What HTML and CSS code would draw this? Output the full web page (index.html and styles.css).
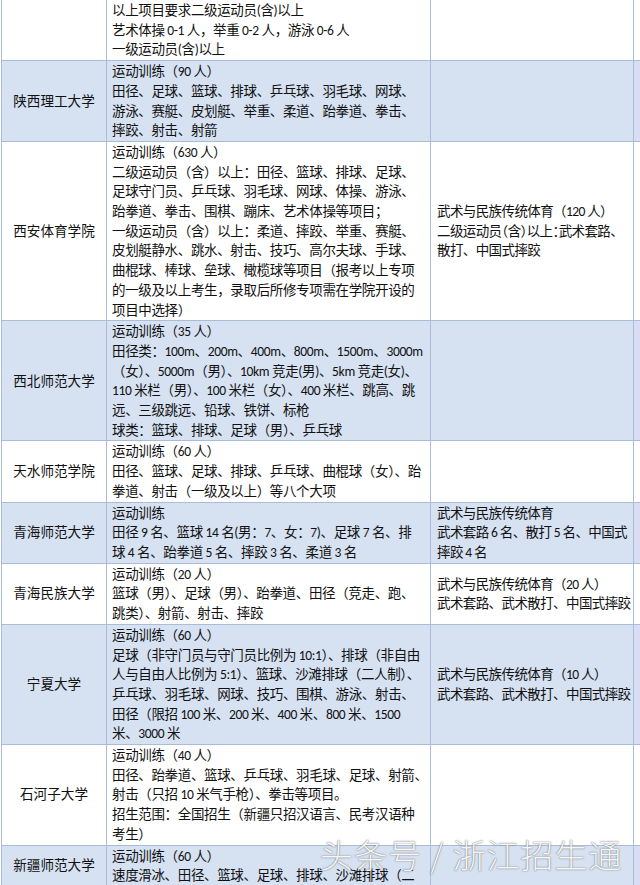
FILE: index.html
```html
<!DOCTYPE html>
<html lang="zh-CN">
<head>
<meta charset="utf-8">
<title>体育院校招生项目</title>
<link rel="stylesheet" href="styles.css">
</head>
<body>
<div class="page">
<table class="plan">
  <colgroup>
    <col class="c-name"><col class="c-main"><col class="c-side"><col class="c-edge">
  </colgroup>
  <tbody>
    <tr class="row-w row-first">
      <td class="name"></td>
      <td class="main">以上项目要求二级运动员(含)以上<br>艺术体操 0-1 人，举重 0-2 人，游泳 0-6 人<br>一级运动员(含)以上</td>
      <td class="side"></td><td class="edge"></td>
    </tr>
    <tr class="row-b">
      <td class="name">陕西理工大学</td>
      <td class="main">运动训练（90 人）<br>田径、足球、篮球、排球、乒乓球、羽毛球、网球、<br>游泳、赛艇、皮划艇、举重、柔道、跆拳道、拳击、<br>摔跤、射击、射箭</td>
      <td class="side"></td><td class="edge"></td>
    </tr>
    <tr class="row-w">
      <td class="name">西安体育学院</td>
      <td class="main">运动训练（630 人）<br>二级运动员（含）以上：田径、篮球、排球、足球、<br>足球守门员、乒乓球、羽毛球、网球、体操、游泳、<br>跆拳道、拳击、围棋、蹦床、艺术体操等项目；<br>一级运动员（含）以上：柔道、摔跤、举重、赛艇、<br>皮划艇静水、跳水、射击、技巧、高尔夫球、手球、<br>曲棍球、棒球、垒球、橄榄球等项目（报考以上专项<br>的一级及以上考生，录取后所修专项需在学院开设的<br>项目中选择）</td>
      <td class="side">武术与民族传统体育（120 人）<br>二级运动员<span class="halt">（含）</span>以上<span class="halt">：</span>武术套路、<br>散打、中国式摔跤</td><td class="edge"></td>
    </tr>
    <tr class="row-b">
      <td class="name">西北师范大学</td>
      <td class="main">运动训练（35 人）<br>田径类：100m、200m、400m、800m、1500m、3000m<br>（女）、5000m（男）、10km 竞走(男)、5km 竞走(女)、<br>110 米栏（男）、100 米栏（女）、400 米栏、跳高、跳<br>远、三级跳远、铅球、铁饼、标枪<br>球类：篮球、排球、足球（男）、乒乓球</td>
      <td class="side"></td><td class="edge"></td>
    </tr>
    <tr class="row-w">
      <td class="name">天水师范学院</td>
      <td class="main">运动训练（60 人）<br>田径、篮球、足球、排球、乒乓球、曲棍球（女）、跆<br>拳道、射击（一级及以上）等八个大项</td>
      <td class="side"></td><td class="edge"></td>
    </tr>
    <tr class="row-b">
      <td class="name">青海师范大学</td>
      <td class="main">运动训练<br>田径 9 名、篮球 14 名(男：7、女：7)、足球 7 名、排<br>球 4 名、跆拳道 5 名、摔跤 3 名、柔道 3 名</td>
      <td class="side">武术与民族传统体育<br>武术套路 6 名、散打 5 名、中国式<br>摔跤 4 名</td><td class="edge"></td>
    </tr>
    <tr class="row-w">
      <td class="name">青海民族大学</td>
      <td class="main">运动训练（20 人）<br>篮球（男）、足球（男）、跆拳道、田径（竞走、跑、<br>跳类）、射箭、射击、摔跤</td>
      <td class="side">武术与民族传统体育（20 人）<br>武术套路、武术散打、中国式摔跤</td><td class="edge"></td>
    </tr>
    <tr class="row-b">
      <td class="name">宁夏大学</td>
      <td class="main">运动训练（60 人）<br>足球（非守门员与守门员比例为 10:1）、排球（非自由<br>人与自由人比例为 5:1）、篮球、沙滩排球（二人制）、<br>乒乓球、羽毛球、网球、技巧、围棋、游泳、射击、<br>田径（限招 100 米、200 米、400 米、800 米、1500<br>米、3000 米</td>
      <td class="side">武术与民族传统体育（10 人）<br>武术套路、武术散打、中国式摔跤</td><td class="edge"></td>
    </tr>
    <tr class="row-w">
      <td class="name">石河子大学</td>
      <td class="main">运动训练（40 人）<br>田径、跆拳道、篮球、乒乓球、羽毛球、足球、射箭、<br>射击（只招 10 米气手枪）、拳击等项目。<br>招生范围：全国招生（新疆只招汉语言、民考汉语种<br>考生）</td>
      <td class="side"></td><td class="edge"></td>
    </tr>
    <tr class="row-b">
      <td class="name">新疆师范大学</td>
      <td class="main">运动训练（60 人）<br>速度滑冰、田径、篮球、足球、排球、沙滩排球（二</td>
      <td class="side"></td><td class="edge"></td>
    </tr>
  </tbody>
</table>
<div class="watermark">头条号 / 浙江招生通</div>
</div>
</body>
</html>
```

FILE: styles.css
```css
html, body {
  margin: 0;
  padding: 0;
  background: #ffffff;
}

.page {
  position: relative;
  width: 640px;
  height: 885px;
  overflow: hidden;
}

.plan {
  border-collapse: collapse;
  table-layout: fixed;
  width: 639px;
  margin: -1px 0 0 1px;
  font-family: "Liberation Sans Narrow", "Carlito", "Lato", "Noto Sans CJK SC", sans-serif;
  font-size: 13.5px;
  line-height: 19.7px;
  letter-spacing: -0.35px;
  color: #111111;
}

.c-name { width: 105px; }
.c-main { width: 324px; }
.c-side { width: 203px; }
.c-edge { width: 7px; }

.plan td {
  border: 1px solid #a9bcd8;
  padding: 1px 0 0 6px;
  vertical-align: middle;
  white-space: nowrap;
  overflow: hidden;
}

.plan td.name {
  text-align: center;
  padding: 1px 0 0 0;
  font-size: 13.6px;
  letter-spacing: 0;
}

.plan td.main {
  vertical-align: top;
  padding-left: 5px;
}

.plan td.side {
  letter-spacing: -0.6px;
}

.halt {
  font-feature-settings: "halt" 1;
}

.plan td.edge {
  border-left-color: #b6bfe6;
  border-right: none;
  padding: 0;
}

.row-b td {
  background: #d6e1f1;
}

.row-b td.edge {
  background: #d9def4;
}

.row-w td {
  background: #ffffff;
}

.watermark {
  position: absolute;
  left: 320px;
  top: 830px;
  font-family: "Noto Sans CJK SC", sans-serif;
  font-weight: 300;
  font-size: 33px;
  line-height: 48px;
  letter-spacing: 1px;
  color: rgba(255, 255, 255, 0.95);
  text-shadow: 0 0 1px rgba(90, 90, 90, 0.9), 0 0 2px rgba(120, 120, 120, 0.5);
  white-space: nowrap;
}
```
